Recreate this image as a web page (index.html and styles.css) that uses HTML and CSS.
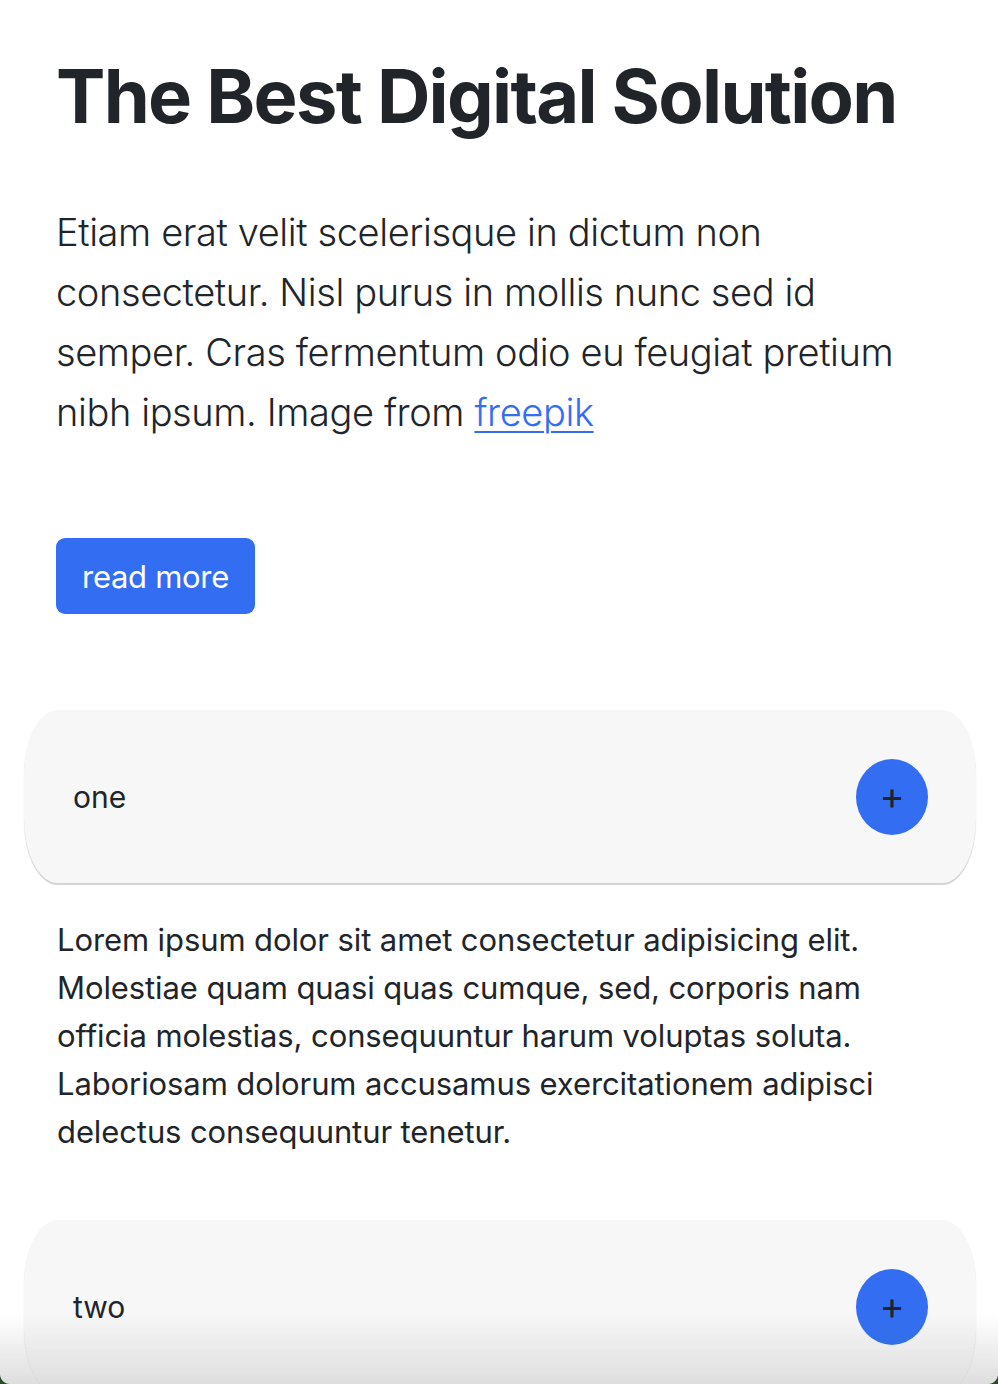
FILE: index.html
```html
<!DOCTYPE html>
<html lang="en">
<head>
<meta charset="utf-8">
<title>The Best Digital Solution</title>
<link rel="stylesheet" href="styles.css">
</head>
<body>
<main class="page">
  <section class="hero">
    <h1 class="title">The Best Digital Solution</h1>
    <p class="lead">Etiam erat velit scelerisque in dictum non consectetur. Nisl purus in mollis nunc sed id semper. Cras fermentum odio eu feugiat pretium nibh ipsum. Image from <a href="#" class="link">freepik</a></p>
    <a href="#" class="btn">read more</a>
  </section>
  <section class="accordion">
    <div class="acc-item">
      <div class="acc-head">
        <span class="acc-label">one</span>
        <span class="acc-toggle">+</span>
      </div>
      <p class="acc-body">Lorem ipsum dolor sit amet consectetur adipisicing elit. Molestiae quam quasi quas cumque, sed, corporis nam officia molestias, consequuntur harum voluptas soluta. Laboriosam dolorum accusamus exercitationem adipisci delectus consequuntur tenetur.</p>
    </div>
    <div class="acc-item">
      <div class="acc-head">
        <span class="acc-label">two</span>
        <span class="acc-toggle">+</span>
      </div>
    </div>
  </section>
</main>
<div class="window-fade"></div>
<div class="corner corner-left"></div>
<div class="corner corner-right"></div>
</body>
</html>
```
FILE: styles.css
```css
* { box-sizing: border-box; }
html, body { margin: 0; padding: 0; background: #fff; }
body {
  font-family: Inter, "Noto Sans", "Liberation Sans", sans-serif;
  color: #212529;
  overflow: hidden;
  height: 1384px;
}
.page {
  padding: 0 22px 0 24px;
}
.hero {
  padding: 58px 32px 0 32px;
  display: flex;
  flex-direction: column;
  align-items: flex-start;
}
.title {
  margin: 0;
  font-size: 74px;
  font-weight: 700;
  line-height: 76px;
  letter-spacing: -1.7px;
  color: #212529;
}
.lead {
  margin: 68px 0 0 0;
  max-width: 860px;
  font-size: 38px;
  font-weight: 300;
  line-height: 60px;
  letter-spacing: -0.4px;
}
.link { color: #336ef2; text-decoration: underline; text-underline-offset: 5px; text-decoration-thickness: 2px; }
.btn {
  margin-top: 96px;
  display: inline-flex;
  align-items: center;
  justify-content: center;
  width: 199px;
  height: 76px;
  background: #336ef2;
  color: #fff;
  border-radius: 9px;
  font-size: 31px;
  font-weight: 400;
  text-decoration: none;
  letter-spacing: -0.3px;
}
.accordion {
  margin-top: 96px;
  display: flex;
  flex-direction: column;
}
.acc-item { display: flex; flex-direction: column; }
.acc-head {
  height: 173px;
  background: #f7f7f7;
  border-radius: 34px / 64px;
  box-shadow: 0 2px 1px rgba(0,0,0,0.18);
  display: flex;
  align-items: center;
  justify-content: space-between;
  padding: 0 48px 0 49px;
}
.acc-label {
  font-size: 30px;
  color: #212529;
}
.acc-toggle {
  width: 72px;
  height: 76px;
  border-radius: 50%;
  background: #336ef2;
  color: #212529;
  display: flex;
  align-items: center;
  justify-content: center;
  font-size: 38px;
  font-weight: 400;
  line-height: 1;
  padding-bottom: 3px;
}
.acc-body {
  margin: 0;
  max-width: 890px;
  padding: 33px 32px 64px 33px;
  font-size: 31px;
  line-height: 48px;
  letter-spacing: -0.1px;
}
.window-fade {
  position: fixed;
  left: 0;
  right: 0;
  bottom: 0;
  height: 70px;
  background: linear-gradient(to bottom, rgba(255,255,255,0) 0%, #dedede 100%);
  mix-blend-mode: darken;
  pointer-events: none;
}
.corner {
  position: fixed;
  bottom: 0;
  width: 10px;
  height: 10px;
  pointer-events: none;
}
.corner-left { left: 0; background: radial-gradient(circle at 10px 0, transparent 9.5px, #2b4a29 10.5px); }
.corner-right { right: 0; background: radial-gradient(circle at 0 0, transparent 9.5px, #2b4a29 10.5px); }
```
